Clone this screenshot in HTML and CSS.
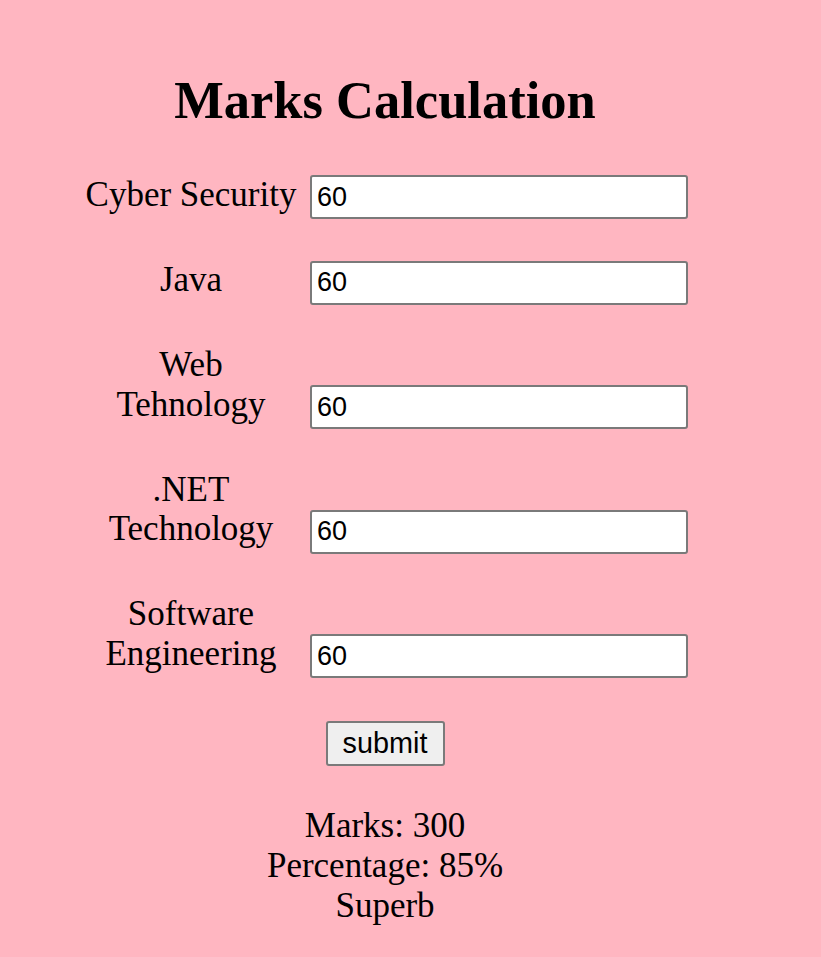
FILE: index.html
```html
<!DOCTYPE html>
<html lang="en">
<head>
<meta charset="utf-8">
<title>Marks Calculation</title>
<link rel="stylesheet" href="styles.css">
</head>
<body>
<main class="page">
  <h1 class="title">Marks Calculation</h1>
  <form class="form">
    <div class="row"><label class="label" for="cs">Cyber Security</label><input class="field" id="cs" type="text" value="60"></div>
    <div class="row"><label class="label" for="java">Java</label><input class="field" id="java" type="text" value="60"></div>
    <div class="row"><label class="label" for="web">Web Tehnology</label><input class="field" id="web" type="text" value="60"></div>
    <div class="row"><label class="label" for="net">.NET Technology</label><input class="field" id="net" type="text" value="60"></div>
    <div class="row"><label class="label" for="se">Software Engineering</label><input class="field" id="se" type="text" value="60"></div>
    <div class="actions"><button class="submit" type="button">submit</button></div>
  </form>
  <div class="result">
    <div>Marks: 300</div>
    <div>Percentage: 85%</div>
    <div>Superb</div>
  </div>
</main>
</body>
</html>
```

FILE: styles.css
```css
html, body {
  margin: 0;
  padding: 0;
}

body {
  background: #ffb6c1;
  color: #000;
  font-family: "Liberation Serif", "Times New Roman", serif;
  font-size: 35px;
}

.page {
  width: 770px;
  padding-top: 70.4px;
}

.title {
  margin: 0 0 44.5px;
  font-size: 52.5px;
  font-weight: bold;
  line-height: normal;
  text-align: center;
}

.form {
  margin: 0;
}

.row {
  padding-left: 81px;
  font-size: 35px;
  line-height: 39.2px;
  margin-bottom: 40.8px;
}

.row:last-of-type {
  margin-bottom: 0;
}

.label {
  display: inline-block;
  width: 220px;
  text-align: center;
  vertical-align: baseline;
}

.field {
  box-sizing: border-box;
  width: 378px;
  height: 44px;
  margin: 0 0 0 9px;
  padding: 0 5px;
  border: 2px solid #7a7a7a;
  border-radius: 3px;
  background: #fff;
  color: #000;
  font-family: "Liberation Sans", Arial, sans-serif;
  font-size: 27px;
  vertical-align: baseline;
}

.actions {
  display: flex;
  justify-content: center;
  margin-top: 42.5px;
}

.submit {
  box-sizing: border-box;
  width: 119px;
  height: 45px;
  padding: 0;
  border: 2px solid #7a7a7a;
  border-radius: 3px;
  background: #efefef;
  color: #000;
  font-family: "Liberation Sans", Arial, sans-serif;
  font-size: 28.8px;
}

.result {
  margin-top: 40.5px;
  text-align: center;
  line-height: normal;
}
```
